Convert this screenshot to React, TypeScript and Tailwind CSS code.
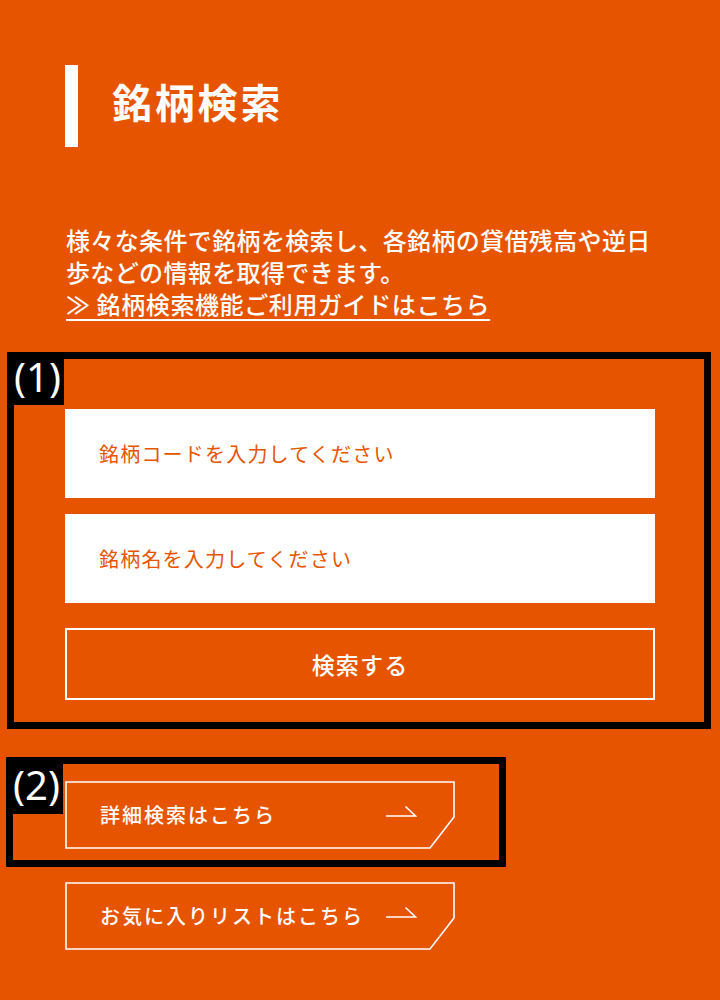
import React from "react";

const Arrow = () => (
  <svg width="31" height="12" viewBox="0 0 31 12" className="-mt-[9px] shrink-0">
    <path d="M0 11 H29.5 L19.5 1.5" fill="none" stroke="white" strokeWidth="1.6" />
  </svg>
);

const LinkButton = ({ label, className = "" }: { label: string; className?: string }) => (
  <a href="#" className={`relative flex h-[68px] w-[390px] items-center justify-between pl-[35px] pr-[38px] text-[20px] font-medium tracking-[0.1em] text-white ${className}`}>
    <svg width="390" height="68" viewBox="0 0 390 68" className="pointer-events-none absolute left-0 top-0">
      <polygon points="1,1 389,1 389,36 365,67 1,67" fill="none" stroke="white" strokeWidth="1.6" />
    </svg>
    <span className="relative leading-none">{label}</span>
    <Arrow />
  </a>
);

export default function App() {
  return (
    <div className="min-h-[1000px] w-full bg-[#e65400] pt-[65px] text-white font-['Noto_Sans_CJK_JP','Noto_Sans',sans-serif]">
      <div className="ml-[65px] flex h-[82px] items-center">
        <div className="h-full w-[13px] bg-white" />
        <h1 className="-mt-[10px] ml-[34px] text-[40px] font-bold leading-none tracking-[0.07em]">銘柄検索</h1>
      </div>

      <p className="ml-[66px] mt-[77px] text-[24px] font-medium leading-[32px] tracking-[0.015em]">
        様々な条件で銘柄を検索し、各銘柄の貸借残高や逆日
        <br />
        歩などの情報を取得できます。
        <br />
        <a href="#" className="tracking-[0.025em] underline decoration-[2px] underline-offset-[5px]">≫ 銘柄検索機能ご利用ガイドはこちら</a>
      </p>

      <div className="relative ml-[7px] mt-[32px] w-[704px] border-[7px] border-black pb-[22px] pl-[51px] pr-[49px] pt-[50px]">
        <div className="absolute left-0 top-0 flex h-[46px] w-[50px] items-start bg-black font-['Noto_Sans',sans-serif] text-[40px] leading-none text-white">
          <span className="-mt-[2px]">(1)</span>
        </div>
        <input
          className="block h-[89px] w-[590px] bg-white pl-[34px] text-[20px] tracking-[0.06em] text-[#e65400] outline-none placeholder:text-[#e65400] placeholder:opacity-100"
          placeholder="銘柄コードを入力してください"
        />
        <input
          className="mt-[16px] block h-[89px] w-[590px] bg-white pl-[34px] text-[20px] tracking-[0.06em] text-[#e65400] outline-none placeholder:text-[#e65400] placeholder:opacity-100"
          placeholder="銘柄名を入力してください"
        />
        <button className="mt-[25px] flex h-[72px] w-[590px] items-center justify-center border-2 border-white text-[23px] font-medium tracking-[0.05em] text-white">
          検索する
        </button>
      </div>

      <div className="relative ml-[6px] mt-[28px] w-[500px] border-[7px] border-black pb-[11px] pl-[52px] pt-[17px]">
        <div className="absolute left-0 top-0 flex h-[50px] w-[50px] items-start bg-black font-['Noto_Sans',sans-serif] text-[40px] leading-none text-white">
          <span className="mt-[1px]">(2)</span>
        </div>
        <LinkButton label="詳細検索はこちら" />
      </div>

      <LinkButton label="お気に入りリストはこちら" className="ml-[65px] mt-[15px]" />
    </div>
  );
}
